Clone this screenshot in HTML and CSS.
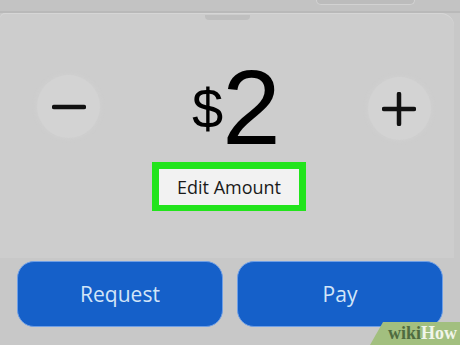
FILE: index.html
```html
<!DOCTYPE html>
<html lang="en">
<head>
    <meta charset="UTF-8">
    <title>Amount</title>
    <link rel="stylesheet" href="styles.css">
</head>
<body>
    <div class="top-strip">
        <div class="tab"></div>
    </div>

    <div class="sheet">
        <div class="handle"></div>

        <div class="amount-row">
            <button class="step-btn minus">
                <svg width="34" height="6" viewBox="0 0 34 6"><line x1="2" y1="3" x2="32" y2="3" stroke="#111" stroke-width="4.5" stroke-linecap="round"/></svg>
            </button>
            <div class="amount">
                <span class="currency">$</span><span class="value">2</span>
            </div>
            <button class="step-btn plus">
                <svg width="34" height="34" viewBox="0 0 34 34"><path d="M2 17H32M17 2V32" stroke="#111" stroke-width="4.5" stroke-linecap="round"/></svg>
            </button>
        </div>

        <div class="edit-wrap">
            <div class="edit-box">Edit Amount</div>
        </div>
    </div>

    <div class="actions">
        <button class="action-btn">Request</button>
        <button class="action-btn">Pay</button>
    </div>

    <div class="watermark"><span class="wiki">wiki</span><span class="how">How</span></div>
</body>
</html>
```

FILE: styles.css
```css
/* Page */
body {
    margin: 0;
    width: 460px;
    height: 345px;
    overflow: hidden;
    background: #c8c8c8;
    font-family: "Open Sans", "Liberation Sans", sans-serif;
    position: relative;
}

/* Strip above the sheet */
.top-strip {
    height: 11px;
    background: #c3c3c3;
    border-bottom: 2px solid #b9b9b9;
    display: flex;
    justify-content: flex-end;
}

.tab {
    width: 97px;
    height: 4px;
    margin-right: 45px;
    background: #bcbcbc;
    border: 1px solid #d2d2d2;
    border-top: none;
    border-radius: 0 0 8px 8px;
}

/* Sheet */
.sheet {
    height: 245px;
    margin-right: 6px;
    background: #cdcdcd;
    border-radius: 5px 13px 0 0;
    box-shadow: inset 0 1px 0 #d6d6d6;
    display: flex;
    flex-direction: column;
    align-items: center;
}

.handle {
    width: 45px;
    height: 5px;
    margin-top: 2px;
    background: #bfbfbf;
    border-radius: 0 0 4px 4px;
}

/* Amount row */
.amount-row {
    width: 100%;
    margin-top: 43px;
    display: flex;
    align-items: flex-start;
    box-sizing: border-box;
}

.step-btn {
    width: 63px;
    height: 63px;
    border: none;
    border-radius: 50%;
    background: #d3d3d3;
    box-shadow: 0 0 4px 1px #d0d0d0;
    display: flex;
    align-items: center;
    justify-content: center;
    padding: 0;
    margin-top: 12px;
}

.minus {
    margin-left: 37px;
}

.plus {
    margin-left: 87px;
    margin-top: 14px;
}

.amount {
    margin-left: 92px;
    display: flex;
    align-items: flex-start;
    color: #000;
    font-family: "Liberation Sans", Arial, sans-serif;
}

.currency {
    font-size: 56px;
    line-height: 56px;
    margin-top: 18px;
}

.value {
    font-size: 105px;
    line-height: 90px;
    margin-left: -1px;
}

/* Edit amount */
.edit-wrap {
    margin-top: 9px;
    margin-left: 4px;
    border: 7px solid #22e41c;
    border-bottom-width: 6px;
}

.edit-box {
    width: 140px;
    height: 36px;
    background: #f2f2f2;
    color: #1a1a1a;
    font-size: 18px;
    line-height: 36px;
    text-align: center;
}

/* Action buttons */
.actions {
    display: flex;
    gap: 14px;
    padding: 3px 17px 0;
}

.action-btn {
    flex: 1;
    height: 66px;
    border: 1px solid #6f9fe6;
    border-radius: 17px;
    background: #1560c9;
    color: #d2e5f8;
    font-family: "Open Sans", "Liberation Sans", sans-serif;
    font-size: 21px;
    padding: 0;
}

/* Watermark */
.watermark {
    position: absolute;
    right: 0;
    bottom: 0;
    width: 90px;
    height: 23px;
    background: #a2bf7f;
    clip-path: polygon(13px 0, 100% 0, 100% 100%, 0 100%);
    font-family: "Liberation Serif", serif;
    font-weight: bold;
    font-size: 18px;
    line-height: 22px;
    text-align: right;
}

.wiki {
    color: #4f6b40;
}

.how {
    color: #f1f5ea;
    padding-right: 3px;
}
```
